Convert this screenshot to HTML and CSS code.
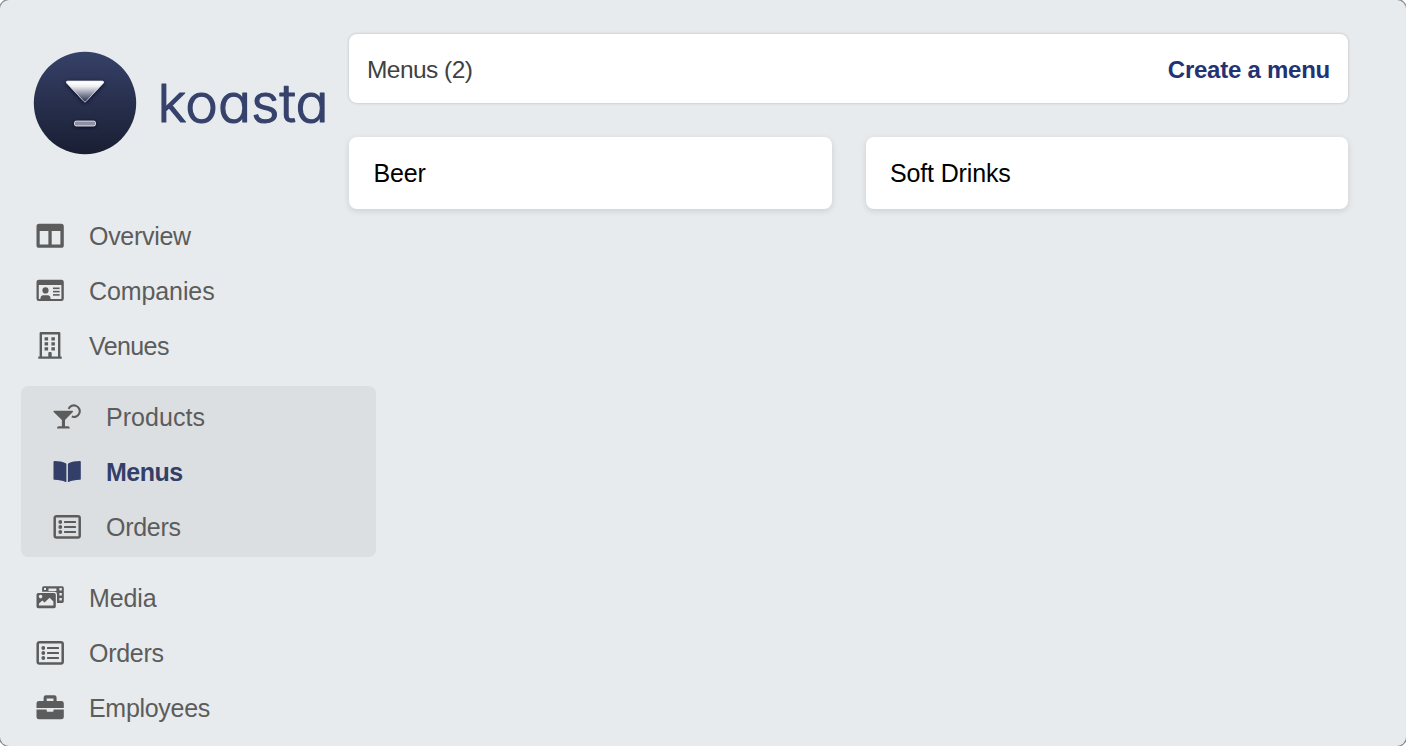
FILE: index.html
```html
<!DOCTYPE html>
<html lang="en">
<head>
<meta charset="utf-8">
<title>Koasta – Menus</title>
<link rel="stylesheet" href="styles.css">
</head>
<body>
<svg class="symbols" width="0" height="0" aria-hidden="true">
  <symbol id="orders" viewBox="0 0 28 28"><rect x="1.7" y="3.2" width="25" height="21.4" rx="1.8" fill="none" stroke="currentColor" stroke-width="2.5"/><g fill="currentColor"><circle cx="7.3" cy="9" r="1.9"/><circle cx="7.3" cy="14" r="1.9"/><circle cx="7.3" cy="19" r="1.9"/><rect x="11" y="7.9" width="12" height="2.1" rx=".6"/><rect x="11" y="12.9" width="12" height="2.1" rx=".6"/><rect x="11" y="17.9" width="12" height="2.1" rx=".6"/></g></symbol>
</svg>
<div class="app">
  <aside class="sidebar">
    <div class="brand">
      <svg class="logo" viewBox="0 0 104 104">
        <defs>
          <linearGradient id="disc" x2="0" y2="1"><stop offset="0" stop-color="#364168"/><stop offset="1" stop-color="#191e32"/></linearGradient>
          <linearGradient id="glass" x2="0" y2="1"><stop offset=".08" stop-color="#fff"/><stop offset=".25" stop-color="#eeeef3"/><stop offset=".95" stop-color="#333956"/></linearGradient>
          <linearGradient id="rim" x2="0" y2="1"><stop offset="0" stop-color="#fff"/><stop offset="1" stop-color="#a3a9bf"/></linearGradient>
          <filter id="shade" x="-30%" y="-50%" width="160%" height="220%"><feDropShadow dx="0" dy="1" stdDeviation="2" flood-color="#080c1c" flood-opacity=".85"/></filter>
        </defs>
        <circle cx="52" cy="52" r="51.2" fill="url(#disc)"/>
        <path filter="url(#shade)" d="M34.6 30.3H69.4Q71.4 30.3 70 32.2L53 50.4Q52 51.4 51 50.4L34 32.2Q32.6 30.3 34.6 30.3Z" fill="url(#glass)" stroke="url(#rim)" stroke-width="1"/>
        <g filter="url(#shade)"><rect x="41.5" y="70.2" width="21" height="4.6" rx="1.6" fill="#8c90a6" stroke="#d5d7e1" stroke-width="1"/></g>
      </svg>
      <svg class="wordmark" viewBox="0 0 170 60"><text x="-.5" y="48.8" textLength="171" lengthAdjust="spacingAndGlyphs">koasta</text></svg>
    </div>
    <nav class="nav">
      <a class="item snug"><svg class="icon" viewBox="0 0 28 28"><path fill="currentColor" fill-rule="evenodd" d="M3 1.8H25.2Q27.8 1.8 27.8 4.4V23.2Q27.8 25.8 25.2 25.8H3Q.5 25.8 .5 23.2V4.4Q.5 1.8 3 1.8ZM3.7 9V22.4H12.4V9ZM15.7 9V22.4H24.4V9Z"/></svg><span>Overview</span></a>
      <a class="item"><svg class="icon" viewBox="0 0 28 28"><path fill="currentColor" fill-rule="evenodd" d="M2.8 2.8H25.4Q27.8 2.8 27.8 5V21.7Q27.8 24 25.4 24H2.8Q.5 24 .5 21.7V5Q.5 2.8 2.8 2.8ZM2.8 8V21.9H25.4V8Z"/><g fill="currentColor"><circle cx="9.5" cy="13.4" r="3.1"/><path d="M4.5 22.5V21.3Q4.5 18.6 7.3 18.3H11.7Q14.5 18.6 14.5 21.3V22.5Z"/><rect x="17" y="10.5" width="6.6" height="1.6"/><rect x="17" y="13.8" width="6.6" height="1.6"/><rect x="17" y="17.1" width="6.6" height="1.6"/></g></svg><span>Companies</span></a>
      <a class="item tight"><svg class="icon" viewBox="0 0 28 28"><path d="M4.8 26V1.2H23.2V26" fill="none" stroke="currentColor" stroke-width="2.4" stroke-linejoin="round"/><path fill="currentColor" d="M2.3 24.4H12.3V21.3Q12.3 20.1 13.3 20.1H14.7Q15.7 20.1 15.7 21.3V24.4H25.7V26.8H2.3ZM8.6 5.2h3.5v3.2H8.6zM15.4 5.2h3.5v3.2h-3.5zM8.6 10.2h3.5v3.2H8.6zM15.4 10.2h3.5v3.2h-3.5zM8.6 15.2h3.5v3.2H8.6zM15.4 15.2h3.5v3.2h-3.5z"/></svg><span>Venues</span></a>
      <div class="group">
        <a class="item loose"><svg class="icon" viewBox="0 0 28 28"><path fill="currentColor" d="M1.2 7.7H19.2Q20.6 8 19.6 9.3L12 17V23.3H15Q16.8 23.3 16.8 25.5H4Q4 23.3 5.8 23.3H8.9V17L.9 9.3Q-.1 8 1.2 7.7Z"/><path fill="none" stroke="currentColor" stroke-width="2.1" d="M15.6 5.9A5.8 5.8 0 1 1 18.8 13.6"/></svg><span>Products</span></a>
        <a class="item current"><svg class="icon" viewBox="0 0 28 28"><path fill="currentColor" d="M1.3 3.1Q8.4 3.2 12.7 5.2Q13.4 5.5 13.4 6.2V23.5Q13.4 24.4 12.6 24Q8.5 22.1 1.4 21.8Q.5 21.7 .5 20.9V3.9Q.5 3.1 1.3 3.1ZM27 3.1Q19.9 3.2 15.6 5.2Q14.9 5.5 14.9 6.2V23.5Q14.9 24.4 15.7 24Q19.8 22.1 26.9 21.8Q27.8 21.7 27.8 20.9V3.9Q27.8 3.1 27 3.1Z"/></svg><span>Menus</span></a>
        <a class="item snug"><svg class="icon"><use href="#orders"/></svg><span>Orders</span></a>
      </div>
      <a class="item"><svg class="icon" viewBox="0 0 28 28"><path fill="currentColor" fill-rule="evenodd" d="M2.3 9H18Q19.8 9 19.8 10.8V22.4Q19.8 24.2 18 24.2H2.3Q.5 24.2 .5 22.4V10.8Q.5 9 2.3 9ZM4.6 10.8A1.8 1.8 0 1 0 4.6 14.4A1.8 1.8 0 1 0 4.6 10.8ZM3 21.6H17.4V17.6L13.6 13.7L8.5 18.4L6.4 16.4L3 19.5Z"/><path fill="currentColor" fill-rule="evenodd" d="M7.8 2.3H26.2Q27.8 2.3 27.8 4V17.3Q27.8 19 26.2 19H21V10.2Q21 7.8 18.5 7.8H6.1V4Q6.1 2.3 7.8 2.3ZM8 4V6H10V4ZM12.5 4.4V7H20.4V4.4ZM23.4 4.1V6.5H25.8V4.1ZM23.4 9V11.5H25.8V9ZM23.4 14V16.5H25.8V14Z"/></svg><span>Media</span></a>
      <a class="item snug"><svg class="icon"><use href="#orders"/></svg><span>Orders</span></a>
      <a class="item snug"><svg class="icon" viewBox="0 0 28 28"><path fill="currentColor" fill-rule="evenodd" d="M7.6 6.9V3.6Q7.6 1.3 9.9 1.3H18.3Q20.6 1.3 20.6 3.6V6.9H25.3Q27.8 6.9 27.8 9.3V14H.5V9.3Q.5 6.9 3 6.9ZM10.7 4.4V6.9H17.5V4.4Z"/><path fill="currentColor" d="M.5 15.5H10.7V16.9Q10.7 17.7 11.5 17.7H16.7Q17.5 17.7 17.5 16.9V15.5H27.8V22.9Q27.8 25.3 25.3 25.3H3Q.5 25.3 .5 22.9Z"/></svg><span>Employees</span></a>
    </nav>
  </aside>
  <main class="main">
    <header class="toolbar"><span>Menus (2)</span><a class="create">Create a menu</a></header>
    <section class="cards">
      <article class="card">Beer</article>
      <article class="card">Soft Drinks</article>
    </section>
  </main>
</div>
</body>
</html>
```
FILE: styles.css
```css
* { box-sizing: border-box; }
html { background: #fff; }
body {
  margin: 0;
  font-family: "Liberation Sans", Arial, sans-serif;
  font-size: 25px;
  overflow: hidden;
}
.symbols { display: none; }
.app {
  display: flex;
  height: 746px;
  background: #e7ebee;
  border-radius: 9px;
  box-shadow: 0 0 0 1px #858585;
}
.sidebar { width: 349px; flex: none; padding-top: 50.5px; }
.brand { display: flex; align-items: center; padding-left: 33.3px; height: 104px; }
.logo { width: 104px; height: 104px; flex: none; }
.wordmark { width: 170px; height: 60px; margin-left: 20.7px; overflow: visible; }
.wordmark text {
  font-family: Inter, sans-serif;
  font-size: 52px;
  font-weight: 300;
  font-feature-settings: "cv11";
  fill: #36426b;
  stroke: #36426b;
  stroke-width: 1.2px;
  stroke-linejoin: round;
}
.nav { padding: 55px 0 0 21px; }
.item {
  display: flex;
  align-items: center;
  gap: 25px;
  height: 54.7px;
  padding-left: 15px;
  color: #5c5c5c;
  letter-spacing: -0.1px;
}
.snug { letter-spacing: -0.3px; }
.tight { letter-spacing: -0.6px; }
.loose { letter-spacing: 0.05px; }
.icon { width: 28px; height: 28px; flex: none; margin: -1px 0 0 -.5px; }
.item span { margin-left: .5px; }
.group {
  width: 355px;
  height: 171px;
  margin: 12.7px 0 14.2px;
  padding: 4.2px 0 0 17px;
  background: #dcdfe1;
  border-radius: 7px;
}
.current { color: #333f69; font-weight: 700; letter-spacing: -0.5px; }
.main { flex: 1; padding: 34px 58px 0 0; }
.toolbar {
  display: flex;
  justify-content: space-between;
  align-items: center;
  height: 69px;
  padding: 2px 18px 0;
  color: #414141;
  font-size: 24.5px;
  letter-spacing: -0.55px;
  background: #fff;
  border-radius: 8px;
  box-shadow: 0 0 3px rgba(0, 0, 0, .22);
}
.create { color: #233273; font-weight: 700; font-size: 24px; letter-spacing: -0.25px; }
.cards {
  display: grid;
  grid-template-columns: 1fr 1fr;
  gap: 34px;
  margin-top: 34px;
}
.card {
  display: flex;
  align-items: center;
  height: 72px;
  padding: 1px 24.5px 0;
  color: #000;
  letter-spacing: -0.15px;
  background: #fff;
  border-radius: 8px;
  box-shadow: 0 2px 6px rgba(0, 0, 0, .12);
}
```
